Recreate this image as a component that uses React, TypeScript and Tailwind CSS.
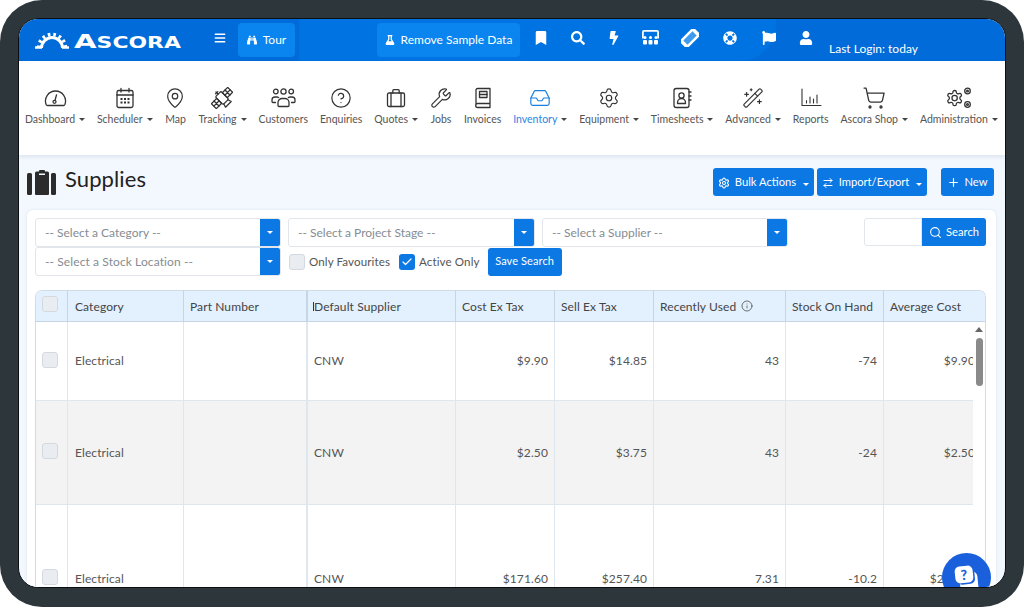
import React from "react";
import { MapPin, CircleHelp, Wrench, Inbox, Settings, WandSparkles, ShoppingCart, Search, Plus, ArrowRightLeft, Check, Info } from "lucide-react";
import { FaBars, FaBinoculars, FaFlask, FaBookmark, FaSearch, FaBolt, FaLifeRing, FaFlag, FaUser } from "react-icons/fa";

const Caret = ({ c = "border-t-[#444]" }: { c?: string }) => (
  <span className={`inline-block w-0 h-0 border-x-[3px] border-x-transparent border-t-[3.5px] ${c}`} />
);

const stroke = { fill: "none", stroke: "#333", strokeWidth: 1.3, strokeLinecap: "round" as const, strokeLinejoin: "round" as const };
const GaugeIcon = () => (
  <svg width="23" height="22" viewBox="0 0 23 22" {...stroke}>
    <path d="M3.500 18.500h16a1.600 1.600 0 0 0 1.400-1A10 10 0 0 0 11.500 4 10 10 0 0 0 2.100 17.500a1.600 1.600 0 0 0 1.400 1z" />
    <circle cx="10.500" cy="14.800" r="1.500" />
    <path d="M11 13.300l1.500-5.300" />
  </svg>
);
const CalendarIcon = () => (
  <svg width="20" height="22" viewBox="0 0 20 22" {...stroke}>
    <rect x="2" y="3.500" width="16" height="17" rx="1.800" />
    <path d="M2 8h16" strokeWidth="1.600" /><path d="M6 1.500v3.500M14 1.500v3.500" />
    <g fill="#333" stroke="none">
      <rect x="5.500" y="11" width="2" height="2" /><rect x="9" y="11" width="2" height="2" /><rect x="12.500" y="11" width="2" height="2" />
      <rect x="5.500" y="14.500" width="2" height="2" /><rect x="9" y="14.500" width="2" height="2" /><rect x="12.500" y="14.500" width="2" height="2" />
    </g>
  </svg>
);
const SatIcon = () => (
  <svg width="22" height="22" viewBox="0 0 22 22" {...stroke}>
    <g transform="rotate(-45 11 11)">
      <rect x="-0.500" y="7.500" width="7.500" height="7" /><path d="M3.200 7.500v7M-.500 11H7" />
      <rect x="15" y="7.500" width="7.500" height="7" /><path d="M18.700 7.500v7M15 11h7.500" />
      <rect x="7" y="5.500" width="8" height="11" rx="1.500" />
      <path d="M8 16.500l-1 3.500h8l-1-3.500M11 2.500v3M9.500 3.500h3" />
    </g>
  </svg>
);
const PeopleIcon = () => (
  <svg width="25" height="22" viewBox="0 0 25 22" {...stroke}>
    <circle cx="12.500" cy="4.500" r="2.600" /><circle cx="4.800" cy="4.500" r="2.300" /><circle cx="20.200" cy="4.500" r="2.300" />
    <path d="M7 18.500v-3a4 4 0 0 1 4-4h3a4 4 0 0 1 4 4v3a1 1 0 0 1-1 1H8a1 1 0 0 1-1-1z" />
    <path d="M4.500 15.500H2a1 1 0 0 1-1-1v-1.500a3 3 0 0 1 3-3h1.800a3 3 0 0 1 1.800.6" /><path d="M20.500 15.500H23a1 1 0 0 0 1-1v-1.500a3 3 0 0 0-3-3h-1.800a3 3 0 0 0-1.800.6" />
  </svg>
);
const CaseIcon = () => (
  <svg width="20" height="22" viewBox="0 0 20 22" {...stroke}>
    <rect x="1.500" y="6" width="17" height="13.500" rx="1.500" />
    <path d="M5 6v13.500M15 6v13.500M6.800 6V3.700a1 1 0 0 1 1-1h4.400a1 1 0 0 1 1 1V6" />
  </svg>
);
const BookIcon = () => (
  <svg width="18" height="22" viewBox="0 0 18 22" {...stroke}>
    <path d="M2 17.500V3a1.500 1.500 0 0 1 1.500-1.500H16v15H3.700a1.900 1.900 0 0 0 0 4H16v-4" />
    <rect x="5.500" y="4.500" width="7.500" height="6" /><path d="M5.500 7.500H13" />
  </svg>
);
const ContactIcon = () => (
  <svg width="22" height="22" viewBox="0 0 22 22" {...stroke}>
    <rect x="3" y="1.500" width="15" height="19" rx="2.200" />
    <circle cx="10.500" cy="8.500" r="2.600" /><path d="M6.500 16.500v-1a4 4 0 0 1 8 0v1z" />
    <path d="M18 5h2M18 9h2M18 13h2" />
  </svg>
);
const BarsIcon = () => (
  <svg width="22" height="22" viewBox="0 0 22 22" {...stroke} strokeWidth={1.1}>
    <path d="M2 2v16.500h19" /><path d="M6.500 16v-2.500M10 16v-6M13.500 16v-4M17 16V8" />
  </svg>
);
const CogsIcon = () => (
  <svg width="25" height="22" viewBox="0 0 25 22" {...stroke}>
    <g transform="translate(-0.500 2) scale(0.76)">
      <path d="M12.220 2h-.44a2 2 0 0 0-2 2v.18a2 2 0 0 1-1 1.730l-.43.250a2 2 0 0 1-2 0l-.15-.080a2 2 0 0 0-2.730.730l-.22.380a2 2 0 0 0 .730 2.730l.15.100a2 2 0 0 1 1 1.720v.510a2 2 0 0 1-1 1.740l-.15.090a2 2 0 0 0-.730 2.730l.22.380a2 2 0 0 0 2.730.730l.15-.080a2 2 0 0 1 2 0l.43.250a2 2 0 0 1 1 1.730V20a2 2 0 0 0 2 2h.44a2 2 0 0 0 2-2v-.18a2 2 0 0 1 1-1.730l.43-.250a2 2 0 0 1 2 0l.15.080a2 2 0 0 0 2.730-.730l.22-.390a2 2 0 0 0-.730-2.730l-.15-.080a2 2 0 0 1-1-1.740v-.500a2 2 0 0 1 1-1.740l.15-.090a2 2 0 0 0 .730-2.730l-.22-.380a2 2 0 0 0-2.730-.730l-.15.080a2 2 0 0 1-2 0l-.43-.250a2 2 0 0 1-1-1.730V4a2 2 0 0 0-2-2z" strokeWidth="1.700" />
      <circle cx="12" cy="12" r="3.500" strokeWidth="1.700" />
    </g>
    <circle cx="21.500" cy="4" r="2.800" /><circle cx="21.500" cy="4" r=".9" />
    <circle cx="21.500" cy="17.500" r="2.800" /><circle cx="21.500" cy="17.500" r=".9" />
  </svg>
);
const lucideProps = { size: 22, strokeWidth: 1.3, color: "#333" };
const navItems: [string, React.ReactNode, boolean][] = [
  ["Dashboard", <GaugeIcon />, true],
  ["Scheduler", <CalendarIcon />, true],
  ["Map", <MapPin {...lucideProps} />, false],
  ["Tracking", <SatIcon />, true],
  ["Customers", <PeopleIcon />, false],
  ["Enquiries", <CircleHelp {...lucideProps} />, false],
  ["Quotes", <CaseIcon />, true],
  ["Jobs", <Wrench {...lucideProps} />, false],
  ["Invoices", <BookIcon />, false],
  ["Inventory", <Inbox size={22} strokeWidth={1.3} color="#1a7fe0" />, true],
  ["Equipment", <Settings {...lucideProps} />, true],
  ["Timesheets", <ContactIcon />, true],
  ["Advanced", <WandSparkles {...lucideProps} />, true],
  ["Reports", <BarsIcon />, false],
  ["Ascora Shop", <ShoppingCart size={24} strokeWidth={1.3} color="#333" />, true],
  ["Administration", <CogsIcon />, true],
];

const SitemapIcon = () => (
  <svg width="17" height="15" viewBox="0 0 17 15" fill="white">
    <path fillRule="evenodd" d="M2 0h13a2 2 0 0 1 2 2v6.500h-1.800V1.800H1.800v6.700H0V2a2 2 0 0 1 2-2z" />
    <circle cx="3" cy="7.500" r="1.500" /><circle cx="8.500" cy="7.500" r="1.500" /><circle cx="14" cy="7.500" r="1.500" />
    <rect x="1" y="10" width="4" height="4.500" rx="1" /><rect x="6.500" y="10" width="4" height="4.500" rx="1" /><rect x="12" y="10" width="4" height="4.500" rx="1" />
  </svg>
);
const TicketIcon = () => (
  <svg width="18" height="18" viewBox="0 0 18 18">
    <g transform="rotate(-45 9 9)">
      <rect x="-1" y="3.500" width="20" height="11" rx="1" fill="white" />
      <rect x="2.500" y="6" width="13" height="6" fill="#3f9bee" />
    </g>
  </svg>
);

const SelectBox = ({ label, w }: { label: string; w: string }) => (
  <div className={`${w} h-[29px] flex bg-white border border-[#e2e6ea] rounded-[3px] overflow-hidden`}>
    <div className="flex-1 pl-[9px] pt-[1px] flex items-center text-[12px] text-[#858c93]">{label}</div>
    <div className="w-[20px] bg-[#0b78e3] flex items-center justify-center"><Caret c="border-t-white" /></div>
  </div>
);

const TopBtn = ({ children, w }: { children: React.ReactNode; w: string }) => (
  <button className={`${w} h-[28px] bg-[#0b78e3] rounded-[3px] text-white text-[11.2px] pt-[2px] flex items-center justify-center gap-[5px]`}>{children}</button>
);

const cols = ["w-[32px]", "w-[116px]", "w-[124px]", "w-[148px]", "w-[99px]", "w-[99px]", "w-[132px]", "w-[98px]", "w-[98px]"];
const headers = ["", "Category", "Part Number", "Default Supplier", "Cost Ex Tax", "Sell Ex Tax", "Recently Used", "Stock On Hand", "Average Cost"];
const rows = [
  { h: "h-[79px]", bg: "bg-white", v: ["Electrical", "", "CNW", "$9.90", "$14.85", "43", "-74", "$9.90"] },
  { h: "h-[104px]", bg: "bg-[#f3f3f3]", v: ["Electrical", "", "CNW", "$2.50", "$3.75", "43", "-24", "$2.50"] },
  { h: "h-[148px]", bg: "bg-white", v: ["Electrical", "", "CNW", "$171.60", "$257.40", "7.31", "-10.2", "$257.40"] },
];
const Box = () => <span className="block w-[16px] h-[16px] rounded-[3px] bg-[#e9edf1] border border-[#d3d9df]" />;

export default function App() {
  return (
    <div className="w-[1024px] h-[607px] bg-white overflow-hidden [font-family:Lato,'Noto_Sans',sans-serif]">
      <div className="w-full h-full rounded-[42px] bg-[#2c363b] pt-[18px] px-[18px] pb-[19px]">
        <div className="relative w-full h-full rounded-[20px] border border-[#0c0f11] overflow-hidden flex flex-col bg-[#f3f8fe]">
          {/* top bar */}
          <header className="relative h-[42px] shrink-0 bg-[#006bd9] flex items-center text-white overflow-hidden">
            <div className="absolute left-[280px] top-0 bottom-0 w-[477px] bg-[#0073e2] rounded-br-[36px]" />
            <div className="relative flex items-center h-full w-full">
              <div className="w-[195px] flex items-center pl-[16px] gap-[5px] pt-[2px]">
                <svg width="34" height="18" viewBox="0 0 34 18" fill="none" stroke="white" className="shrink-0 -mt-[3px]">
                  <path d="M6.500 17A10.500 10.500 0 0 1 27.500 17" strokeWidth="3" />
                  <path d="M3.500 17A13.500 13.500 0 0 1 30.500 17" strokeWidth="3.500" strokeDasharray="2.600 3" />
                  <path d="M0 16.500h7M27 16.500h7" strokeWidth="2.500" />
                </svg>
                <span className="font-bold text-[20px] leading-none [font-family:'DejaVu_Sans',sans-serif] scale-x-[1.46] origin-left whitespace-nowrap">A<span className="text-[15px]">SCORA</span></span>
              </div>
              <FaBars className="text-[12px] w-[12px] -mt-[4px]" />
              <div className="ml-[12px] w-[57px] h-[34px] rounded-[4px] bg-[#0a84ee] flex items-center justify-center gap-[6px] text-[12px]"><FaBinoculars className="text-[10px]" />Tour</div>
              <div className="ml-[82px] w-[143px] h-[34px] rounded-[4px] bg-[#0a84ee] flex items-center justify-center gap-[6px] text-[12px]"><FaFlask className="text-[10px]" />Remove Sample Data</div>
              <div className="flex items-center -mt-[5px]">
                <FaBookmark className="ml-[15px] text-[14px] w-[12px]" />
                <FaSearch className="ml-[24px] text-[14px]" />
                <FaBolt className="ml-[22px] text-[14px]" />
                <span className="ml-[21px]"><SitemapIcon /></span>
                <span className="ml-[22px]"><TicketIcon /></span>
                <FaLifeRing className="ml-[24px] text-[14px]" />
                <FaFlag className="ml-[25px] text-[14px]" />
                <FaUser className="ml-[23px] text-[14px]" />
              </div>
              <span className="ml-[16px] mt-[18px] text-[12px] whitespace-nowrap">Last Login: today</span>
            </div>
          </header>

          {/* nav */}
          <nav className="h-[94px] shrink-0 bg-white shadow-[0_2px_4px_rgba(60,90,130,0.12)] relative z-10 flex items-start justify-between pl-[6px] pr-[7px] pt-[26px]">
            {navItems.map(([label, icon, caret]) => (
              <div key={label} className={`flex flex-col items-center gap-[4px] text-[10.5px] leading-[12px] ${label === "Inventory" ? "text-[#2a86e0]" : "text-[#555]"}`}>
                <span className="h-[22px] flex items-center">{icon}</span>
                <span className="flex items-center gap-[4px] whitespace-nowrap">{label}{caret && <Caret />}</span>
              </div>
            ))}
          </nav>

          {/* page */}
          <main className="flex-1 min-h-0 flex flex-col pl-[8px] pr-[9px]">
            <div className="h-[55px] shrink-0 flex items-center">
              <svg width="29" height="25" viewBox="0 0 29 25" fill="#2b2b2b" className="-mt-[1px]">
                <rect x="0" y="3" width="5" height="22" rx="1.500" />
                <path d="M8 3a1.500 1.500 0 0 1 1.500-1.500H12V1a1 1 0 0 1 1-1h4a1 1 0 0 1 1 1v.5h2.500A1.500 1.500 0 0 1 22 3v21a1 1 0 0 1-1 1H9a1 1 0 0 1-1-1z" />
                <rect x="12" y="3.500" width="6" height="1.500" fill="#f3f8fe" />
                <rect x="24" y="3" width="5" height="22" rx="1.500" />
              </svg>
              <h1 className="ml-[9px] text-[22px] tracking-[0.1px] text-[#222] font-normal -mt-[8px]">Supplies</h1>
              <div className="ml-auto mr-[2px] flex items-center mt-[-2px]">
                <TopBtn w="w-[101px]"><Settings size={12} strokeWidth={2.2} />Bulk Actions<span className="ml-[2px]"><Caret c="border-t-white" /></span></TopBtn>
                <span className="w-[3px]" />
                <TopBtn w="w-[110px]"><ArrowRightLeft size={12} strokeWidth={2} />Import/Export<span className="ml-[2px]"><Caret c="border-t-white" /></span></TopBtn>
                <span className="w-[14px]" />
                <TopBtn w="w-[53px]"><Plus size={13} strokeWidth={2.2} /><span className="-ml-[1px]">New</span></TopBtn>
              </div>
            </div>

            <section className="flex-1 min-h-0 bg-white rounded-t-[6px] pl-[8px] pr-[10px] pt-[8px] flex flex-col shadow-[0_0_3px_rgba(60,90,130,0.12)]">
              <div className="flex items-start h-[29px]">
                <SelectBox w="w-[246px]" label="-- Select a Category --" />
                <span className="w-[7px]" />
                <SelectBox w="w-[247px]" label="-- Select a Project Stage --" />
                <span className="w-[7px]" />
                <SelectBox w="w-[246px]" label="-- Select a Supplier --" />
                <div className="ml-auto flex h-[28px]">
                  <div className="w-[58px] bg-white border border-[#e2e6ea] rounded-l-[3px]" />
                  <div className="w-[64px] bg-[#0b78e3] rounded-r-[3px] text-white text-[11.2px] flex items-center justify-center gap-[4px]"><Search size={13} strokeWidth={2} />Search</div>
                </div>
              </div>
              <div className="flex items-center h-[29px] text-[11.6px] tracking-[0.1px] text-[#555]">
                <SelectBox w="w-[246px]" label="-- Select a Stock Location --" />
                <span className="ml-[8px] block w-[16px] h-[16px] rounded-[3px] bg-[#e9edf1] border border-[#d3d9df]" />
                <span className="ml-[4px]">Only Favourites</span>
                <span className="ml-[9px] w-[16px] h-[16px] rounded-[3px] bg-[#0b78e3] flex items-center justify-center"><Check size={12} color="white" strokeWidth={2.4} /></span>
                <span className="ml-[4px]">Active Only</span>
                <button className="ml-[8px] w-[74px] h-[28px] bg-[#0b78e3] text-white rounded-[3px] text-[11px]">Save Search</button>
              </div>

              {/* table */}
              <div className="mt-[14px] flex-1 min-h-0 border border-[#cfdce8] border-b-0 rounded-t-[7px] overflow-hidden flex flex-col">
                <div className="flex shrink-0 h-[31px] bg-[#e3f0fd] border-b border-[#c5d5e4]">
                  <div className="w-[937px] flex overflow-hidden">
                    {headers.map((h, i) => (
                      <div key={i} className={`${cols[i]} shrink-0 relative flex items-center px-[6px] text-[12px] tracking-[0.1px] text-[#444] border-r border-[#c5d5e4] whitespace-nowrap ${i === 2 ? "border-r-2" : ""} ${i === 1 ? "pl-[7px]" : ""}`}>
                        {i === 0 && <span className="-mt-[4px]"><Box /></span>}
                        {i === 3 && <span className="absolute left-[5px] top-[11px] w-[1px] h-[9px] bg-[#333]" />}
                        {h && <span className="pt-[1px]">{h}</span>}
                        {i === 6 && <Info size={12} strokeWidth={1.5} className="ml-[5px]" />}
                      </div>
                    ))}
                  </div>
                </div>
                <div className="flex-1 min-h-0 flex overflow-hidden">
                  <div className="w-[937px] shrink-0 overflow-hidden">
                    {rows.map((r, ri) => (
                      <div key={ri} className={`flex ${r.h} ${r.bg} border-b border-[#dfe7ee]`}>
                        <div className={`${cols[0]} shrink-0 flex items-center px-[6px] border-r border-[#dfe7ee]`}><span className="-mt-[3px]"><Box /></span></div>
                        {r.v.map((v, i) => (
                          <div key={i} className={`${cols[i + 1]} shrink-0 flex items-center px-[6px] text-[12px] tracking-[0.1px] text-[#555] border-r border-[#dfe7ee] ${i > 2 ? "justify-end" : ""} ${i === 1 ? "border-r-2" : ""} ${i === 0 ? "pl-[7px]" : ""}`}>{v}</div>
                        ))}
                      </div>
                    ))}
                  </div>
                  <div className="flex-1 bg-white flex flex-col items-center pt-[5px]">
                    <span className="w-0 h-0 border-x-[4px] border-x-transparent border-b-[5px] border-b-[#666]" />
                    <span className="mt-[6px] w-[7px] h-[48px] rounded-[4px] bg-[#8a8a8a]" />
                  </div>
                </div>
              </div>
            </section>
          </main>

          {/* help bubble */}
          <div className="absolute right-[14px] bottom-[-15px] w-[49px] h-[49px] rounded-full bg-[#1a60dd] flex items-start justify-center pt-[13px] z-20">
            <span className="absolute left-[18px] top-[19px] w-[18px] h-[22px] bg-white rounded-[5px] -rotate-[6deg]" />
            <span className="relative -ml-[5px] w-[18px] h-[17px] bg-white rounded-[5px] -rotate-[6deg] shadow-[1.500px_1.500px_0_#1a60dd] text-[#1a60dd] text-[14px] font-black leading-[17px] text-center">?</span>
          </div>
        </div>
      </div>
    </div>
  );
}
